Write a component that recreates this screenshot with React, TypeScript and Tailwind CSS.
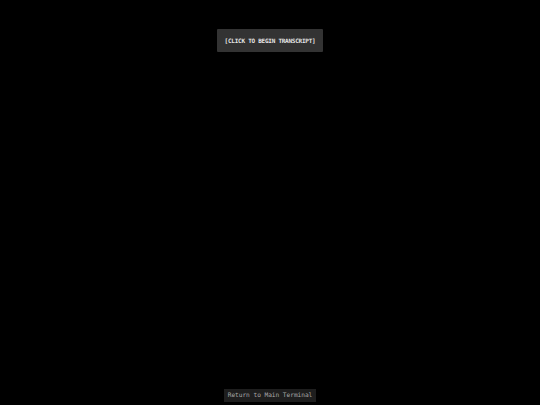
export default function App() {
  return (
    <div
      className="flex h-screen w-full flex-col items-center justify-between bg-black pt-[29px] pb-[3px]"
      style={{ fontFamily: '"DejaVu Sans Mono", "Liberation Mono", monospace' }}
    >
      <button className="flex h-[23px] w-[106px] items-center justify-center rounded-[1px] bg-[#333333] text-[6px] font-bold leading-none tracking-[-0.25px] text-[#e6e6e6]">
        [CLICK TO BEGIN TRANSCRIPT]
      </button>
      <button className="flex h-[13px] w-[92px] items-center justify-center bg-[#1e1e1e] text-[6.2px] leading-none tracking-[-0.05px] text-[#a8a8a8]">
        Return to Main Terminal
      </button>
    </div>
  )
}
